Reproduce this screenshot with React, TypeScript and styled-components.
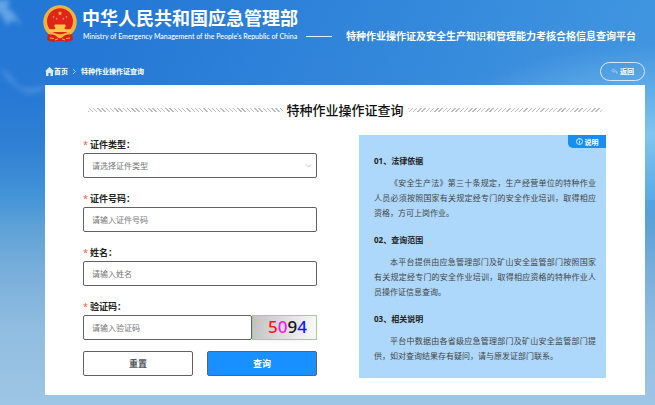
import React, { useState } from "react";
import styled, { createGlobalStyle } from "styled-components";

const GlobalStyle = createGlobalStyle`
  *, *::before, *::after { box-sizing: border-box; }
  body {
    margin: 0;
    font-family: "Noto Sans", "Noto Sans CJK SC", sans-serif;
    color: #222;
  }
  button, input, select { font-family: inherit; margin: 0; }
  h1, h2, h3, p { margin: 0; }
`;

const Page = styled.div`
  position: relative;
  isolation: isolate;
  min-height: 100vh;
  padding: 0 10px 10px 45px;
  background:
    radial-gradient(ellipse 220px 90px at 100% 135px, rgba(150, 212, 244, 0.75), transparent),
    linear-gradient(90deg, rgba(80, 165, 230, 0) 15%, rgba(80, 165, 230, 0.65) 100%) 0 0 / 100% 200px no-repeat,
    linear-gradient(180deg, #2377d5 0, #2779d5 100px, #3182d3 150px, #4595d8 200px, #5da1d6 225px, #78aedb 270px, #91bde0 330px, #9dc5e5 405px);
`;

const Clouds = styled.svg`
  position: absolute;
  top: 0;
  left: 0;
  z-index: -1;
  width: 45px;
  height: 110px;
`;

const Header = styled.header`
  display: flex;
  align-items: flex-start;
  height: 47px;
  padding-top: 5px;
  margin-left: -2px;
  color: #fff;
`;

const Emblem = styled.svg`
  flex: none;
  width: 34px;
  height: 37px;
`;

const Ministry = styled.div`
  flex: none;
  margin-left: 5px;
`;

const MinistryName = styled.h1`
  font-size: 18px;
  line-height: 27px;
  font-weight: 700;
  white-space: nowrap;
`;

const MinistryEnglish = styled.p`
  padding-left: 1px;
  font-family: Lato, "Noto Sans", sans-serif;
  font-size: 7px;
  line-height: 9px;
  font-weight: 500;
  white-space: nowrap;
`;

const Platform = styled.p`
  flex: 1;
  display: flex;
  align-items: center;
  gap: 14px;
  margin: 23px 0 0 8px;
  font-size: 10px;
  line-height: 16px;
  font-weight: 700;
  white-space: nowrap;

  &::before {
    content: "";
    width: 26px;
    height: 1px;
    background: #e4f0fb;
  }
`;

const NavBar = styled.div`
  display: flex;
  align-items: center;
  justify-content: space-between;
  height: 38px;
  padding-top: 10px;
  color: #fff;
  font-size: 7px;
  font-weight: 700;
`;

const Breadcrumb = styled.nav`
  display: flex;
  align-items: center;
  gap: 4px;

  a {
    display: flex;
    align-items: center;
    color: inherit;
    text-decoration: none;
  }
`;

const BackButton = styled.button`
  display: flex;
  align-items: center;
  justify-content: center;
  gap: 2px;
  width: 45px;
  height: 19px;
  padding: 0;
  border: 1px solid #dbe6f4;
  border-radius: 10px;
  background: transparent;
  color: #fff;
  font-size: 7px;
  font-weight: 700;
`;

const Card = styled.main`
  padding: 16px 39px 17px 38px;
  background: #fff;
`;

const CardTitle = styled.h2`
  display: flex;
  align-items: center;
  gap: 4px;
  padding: 0 4px 0 5px;
  font-size: 13px;
  line-height: 18px;
  font-weight: 500;
  color: #111;
  white-space: nowrap;
`;

const Hatch = styled.span<{ $angle: number }>`
  flex: 1;
  height: 4px;
  background: repeating-linear-gradient(${(p) => p.$angle}deg, #bdbdbd 0 1px, #fff 1px 3px);
`;

const Columns = styled.div`
  display: grid;
  grid-template-columns: 234fr 247fr;
  gap: 42px;
  margin-top: 16px;
`;

const Form = styled.form`
  padding-top: 2px;
`;

const Field = styled.div`
  margin-bottom: 13px;
`;

const Label = styled.label`
  display: block;
  font-size: 9px;
  line-height: 16px;
  font-weight: 700;
  color: #222;

  &::before {
    content: "*";
    margin-right: 2px;
    font-weight: 400;
    color: #f5564a;
  }
`;

const control = `
  display: block;
  width: 100%;
  min-width: 0;
  height: 25px;
  padding: 0 8px 1px;
  border: 1px solid #606266;
  border-radius: 2px;
  background: #fff;
  color: #606266;
  font-size: 8px;
  outline: none;
`;

const TextInput = styled.input`
  ${control}
  &::placeholder { color: #757575; opacity: 1; }
`;

const SelectWrap = styled.div`
  position: relative;

  svg {
    position: absolute;
    right: 5px;
    top: 10px;
    pointer-events: none;
  }
`;

const Select = styled.select`
  ${control}
  appearance: none;
  color: #757575;
`;

const CaptchaRow = styled.div`
  display: flex;
`;

const Captcha = styled.button`
  flex: none;
  width: 65px;
  height: 25px;
  padding: 0 0 1px 6px;
  border: 1px solid #a3cc9c;
  background: linear-gradient(100deg, #c2c2c2, #fafafa);
  font-size: 17px;
  line-height: 20px;
  font-weight: 500;
`;

const Digit = styled.span<{ $color: string }>`
  color: ${(p) => p.$color};
`;

const Actions = styled.div`
  display: flex;
  gap: 14px;
  margin-top: -2px;
`;

const ActionButton = styled.button<{ $primary?: boolean }>`
  flex: 1;
  height: 25px;
  padding: 0 0 1px;
  border: 1px solid #606266;
  border-radius: 2px;
  background: ${(p) => (p.$primary ? "#1890ff" : "#fff")};
  color: ${(p) => (p.$primary ? "#fff" : "#55575c")};
  font-size: 9px;
  font-weight: 700;
`;

const Info = styled.aside`
  position: relative;
  padding: 18px 10px 15px 15px;
  background: #add8fb;
`;

const InfoTag = styled.span`
  position: absolute;
  top: 0;
  right: 0;
  display: flex;
  align-items: center;
  justify-content: center;
  gap: 2px;
  width: 38px;
  height: 13px;
  border-bottom-left-radius: 5px;
  background: #188fee;
  color: #fff;
  font-size: 7px;
  font-weight: 700;
`;

const Section = styled.section`
  & + & { margin-top: 12px; }

  h3 {
    font-size: 8px;
    line-height: 15px;
    font-weight: 700;
    color: #222;
  }

  p {
    margin-top: 7px;
    font-size: 8px;
    line-height: 15px;
    color: #444;
    text-indent: 2em;
    text-align: justify;
  }
`;

const star = (cx: number, cy: number, r: number) =>
  Array.from({ length: 10 }, (_, i) => {
    const a = (Math.PI / 5) * i - Math.PI / 2;
    const d = i % 2 ? r * 0.4 : r;
    return `${cx + d * Math.cos(a)},${cy + d * Math.sin(a)}`;
  }).join(" ");

const NationalEmblem = () => (
  <Emblem viewBox="0 0 34 37" aria-hidden="true">
    <path d="M5 27 L4 35 L10 37 L17 35 L24 37 L30 35 L29 27Z" fill="#d9201a" />
    <circle cx="17" cy="17" r="16.7" fill="#f3b83a" />
    <circle cx="17" cy="17" r="14.8" fill="none" stroke="#e5a02e" strokeWidth="0.7" strokeDasharray="1.4 1" />
    <circle cx="17" cy="16.2" r="13" fill="#e0241b" />
    <polygon points={star(17, 8.4, 2.6)} fill="#f3b040" />
    <polygon points={star(10.5, 12, 1.3)} fill="#f3b040" />
    <polygon points={star(13.6, 13.7, 1.3)} fill="#f3b040" />
    <polygon points={star(20.4, 13.7, 1.3)} fill="#f3b040" />
    <polygon points={star(23.5, 12, 1.3)} fill="#f3b040" />
    <path d="M12 19.5h10l1 2.3h-1.2v2.4h5.4l1 2.8H5.8l1-2.8h5.4v-2.4H11z" fill="#f9c84a" />
    <path d="M5 29c4 1 7 0 9 3h6c2-3 5-2 9-3l-1 5c-3-1-5 0-7 2h-8c-2-2-4-3-7-2z" fill="#d9201a" />
    <path d="M14 32q3-4 6 0l-3 1.500z" fill="#f3b83a" />
    <path d="M7 33l4 .6M23 33.600l4-.6M12 35l3-1.200M19 33.800l3 1.200" stroke="#f3b83a" strokeWidth="1" />
  </Emblem>
);

const SkyClouds = () => (
  <Clouds viewBox="0 0 45 110" aria-hidden="true">
    <defs>
      <filter id="soft" x="-50%" y="-50%" width="200%" height="200%">
        <feGaussianBlur stdDeviation="2.4" />
      </filter>
    </defs>
    <g fill="#8cc3ee" filter="url(#soft)">
      <path d="M-4 0 L10 0 L7 8 L13 12 L21 25 L12 19 L8 26 L0 13 L-4 12Z" opacity="0.6" />
      <path d="M0 67 L10 75 L18 86 L28 89 L45 86 L45 89 L30 94 L19 89 L8 80Z" opacity="0.35" />
    </g>
  </Clouds>
);

const sections = [
  {
    title: "01、法律依据",
    text: "《安全生产法》第三十条规定，生产经营单位的特种作业人员必须按照国家有关规定经专门的安全作业培训，取得相应资格，方可上岗作业。",
  },
  {
    title: "02、查询范围",
    text: "本平台提供由应急管理部门及矿山安全监管部门按照国家有关规定经专门的安全作业培训，取得相应资格的特种作业人员操作证信息查询。",
  },
  {
    title: "03、相关说明",
    text: "平台中数据由各省级应急管理部门及矿山安全监管部门提供，如对查询结果存有疑问，请与原发证部门联系。",
  },
];

const captcha = [
  { digit: "5", color: "#ff1414" },
  { digit: "0", color: "#ff14ff" },
  { digit: "9", color: "#141414" },
  { digit: "4", color: "#1414ff" },
];

export default function App() {
  const [type, setType] = useState("");
  return (
    <>
      <GlobalStyle />
      <Page>
        <SkyClouds />
        <Header>
          <NationalEmblem />
          <Ministry>
            <MinistryName>中华人民共和国应急管理部</MinistryName>
            <MinistryEnglish>Ministry of Emergency Management of the People's Republic of China</MinistryEnglish>
          </Ministry>
          <Platform>特种作业操作证及安全生产知识和管理能力考核合格信息查询平台</Platform>
        </Header>
        <NavBar>
          <Breadcrumb aria-label="breadcrumb">
            <a href="#home">
              <svg width="9" height="9" viewBox="0 0 9 9" aria-hidden="true">
                <path d="M4.500 0 9 4.300H8V9H5.500V6h-2v3H1V4.300H0z" fill="#dce9f8" />
              </svg>
              首页
            </a>
            <svg width="5" height="7" viewBox="0 0 5 7" aria-hidden="true">
              <path d="M1 1l2.500 2.500L1 6" fill="none" stroke="#c9def5" strokeWidth="0.8" />
            </svg>
            <span>特种作业操作证查询</span>
          </Breadcrumb>
          <BackButton type="button">
            <svg width="7" height="7" viewBox="0 0 7 7" aria-hidden="true">
              <path d="M2.500 1 .6 2.700l1.900 1.700V3.500c2 0 3 .6 3.800 2.200C6.200 3.500 5 2 2.500 1.900z" fill="none" stroke="#b9d9f3" strokeWidth="0.6" />
            </svg>
            返回
          </BackButton>
        </NavBar>
        <Card>
          <CardTitle>
            <Hatch $angle={45} />
            特种作业操作证查询
            <Hatch $angle={135} />
          </CardTitle>
          <Columns>
            <Form onSubmit={(e) => e.preventDefault()}>
              <Field>
                <Label htmlFor="type">证件类型：</Label>
                <SelectWrap>
                  <Select id="type" value={type} onChange={(e) => setType(e.target.value)}>
                    <option value="">请选择证件类型</option>
                    <option value="id">身份证</option>
                  </Select>
                  <svg width="7" height="6" viewBox="0 0 7 6" aria-hidden="true">
                    <path d="M1 1.500 3.500 4 6 1.500" fill="none" stroke="#b4b8bf" strokeWidth="0.8" />
                  </svg>
                </SelectWrap>
              </Field>
              <Field>
                <Label htmlFor="number">证件号码：</Label>
                <TextInput id="number" placeholder="请输入证件号码" />
              </Field>
              <Field>
                <Label htmlFor="name">姓名：</Label>
                <TextInput id="name" placeholder="请输入姓名" />
              </Field>
              <Field>
                <Label htmlFor="code">验证码：</Label>
                <CaptchaRow>
                  <TextInput id="code" placeholder="请输入验证码" />
                  <Captcha type="button">
                    {captcha.map((c) => (
                      <Digit key={c.digit} $color={c.color}>{c.digit}</Digit>
                    ))}
                  </Captcha>
                </CaptchaRow>
              </Field>
              <Actions>
                <ActionButton type="reset">重置</ActionButton>
                <ActionButton type="submit" $primary>查询</ActionButton>
              </Actions>
            </Form>
            <Info>
              <InfoTag>
                <svg width="7" height="7" viewBox="0 0 7 7" aria-hidden="true">
                  <circle cx="3.500" cy="3.500" r="3" fill="none" stroke="#fff" strokeWidth="0.8" />
                  <path d="M3.500 1.500v.8M3.500 3v2.500" stroke="#fff" strokeWidth="0.9" />
                </svg>
                说明
              </InfoTag>
              {sections.map((s) => (
                <Section key={s.title}>
                  <h3>{s.title}</h3>
                  <p>{s.text}</p>
                </Section>
              ))}
            </Info>
          </Columns>
        </Card>
      </Page>
    </>
  );
}
